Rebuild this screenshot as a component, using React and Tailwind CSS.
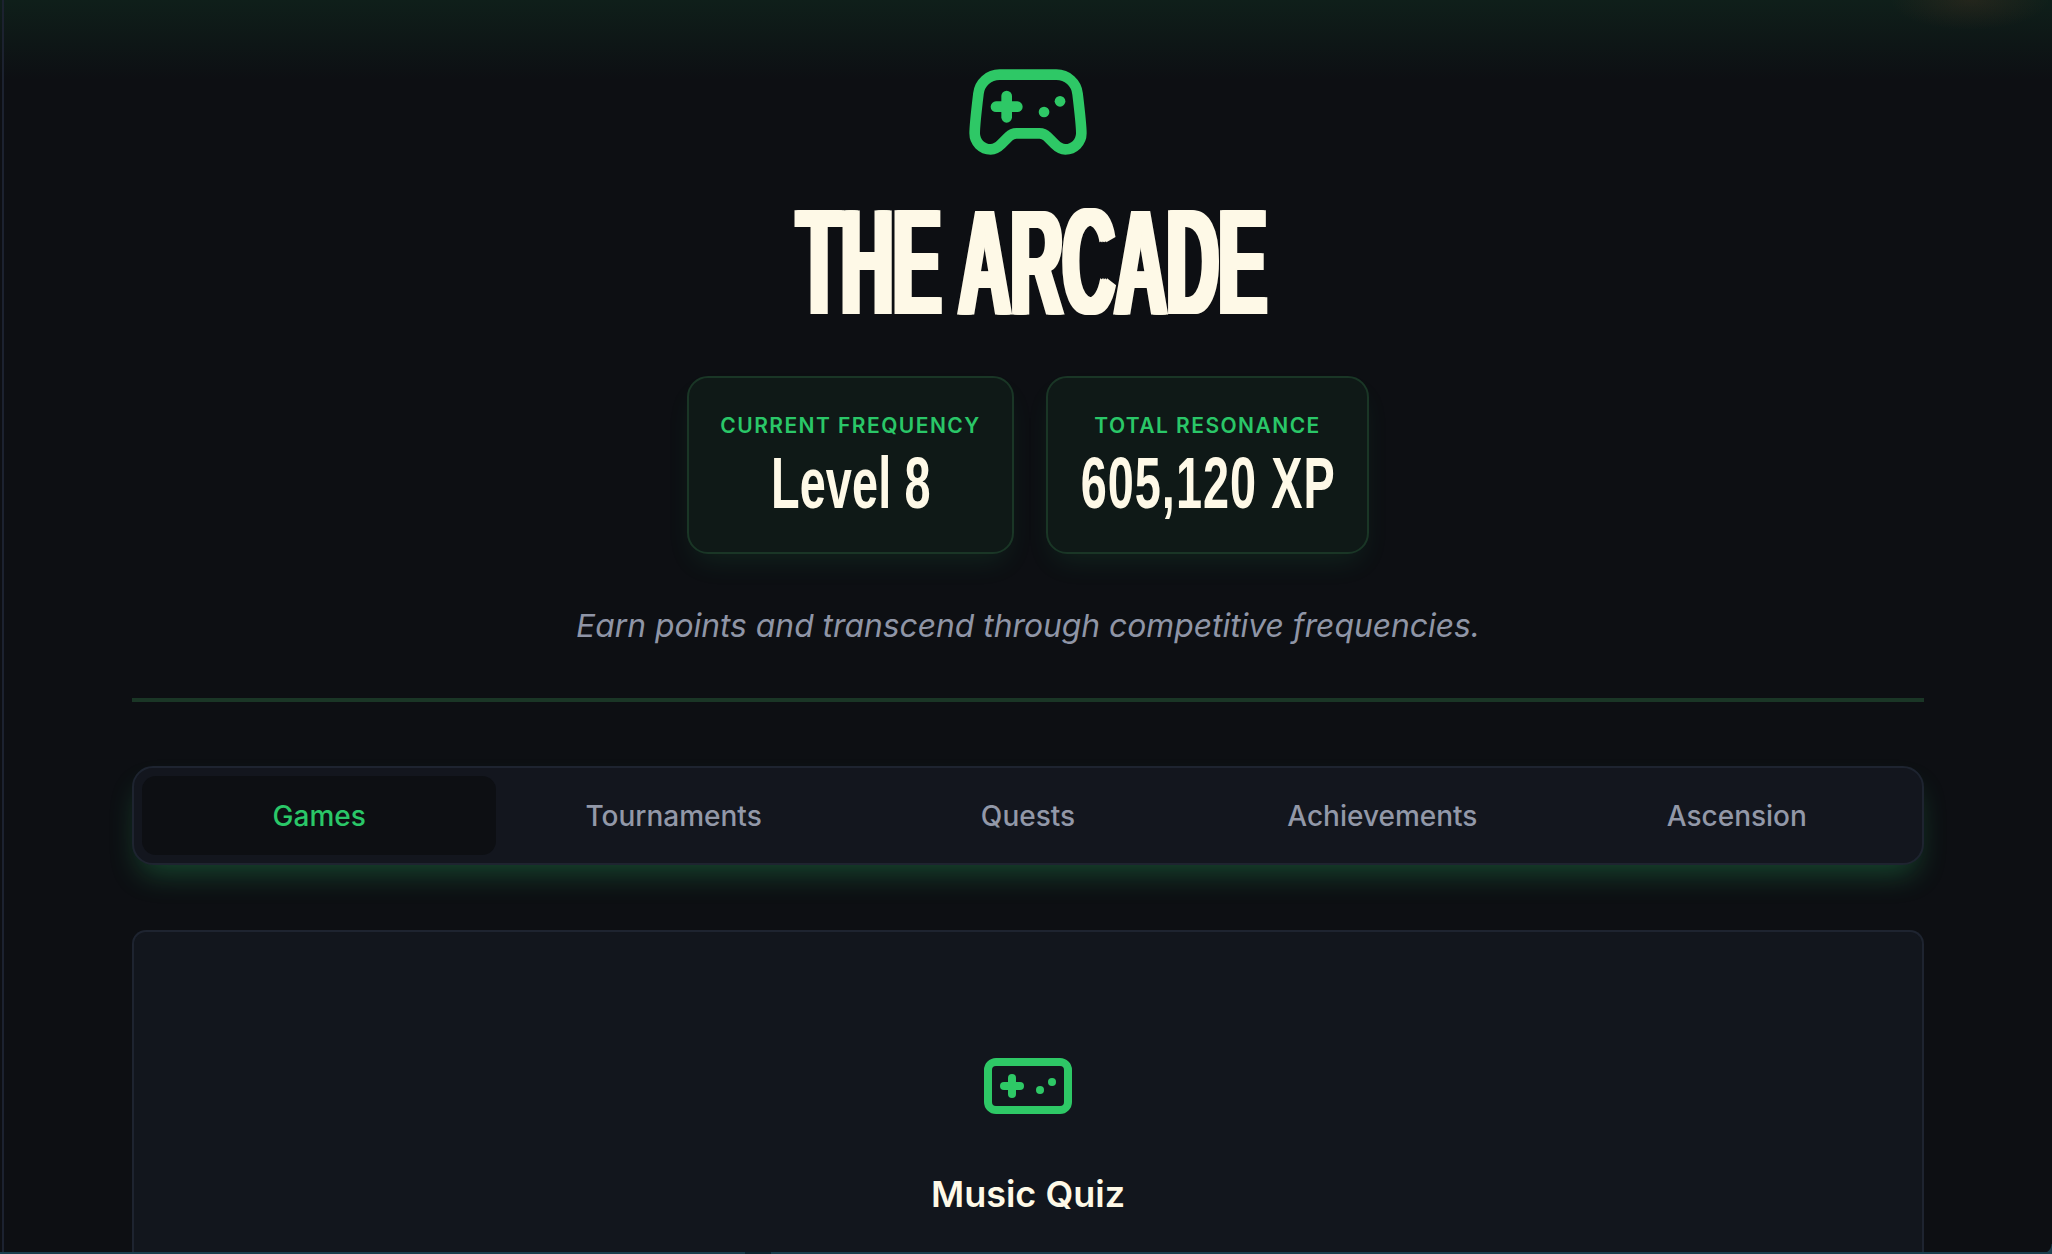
import { Gamepad, Gamepad2 } from 'lucide-react';

const TABS = ['Games', 'Tournaments', 'Quests', 'Achievements', 'Ascension'];

function StatCard({ label, value, width, valueClass }) {
  return (
    <div className={`${width} h-[178px] rounded-[21px] border-2 border-[#1a3626] bg-[#0f1917] pt-[34px] flex flex-col items-center shadow-[0_14px_28px_-7px_rgba(46,204,113,0.1)]`}>
      <div className="text-[21px] leading-[28px] font-semibold tracking-[1.45px] text-[#2ac768] whitespace-nowrap">{label}</div>
      <div className="mt-[6px] h-[74px] w-full flex justify-center">
        <span className={`font-['Liberation_Sans'] font-bold text-[72px] leading-[74px] text-[#fef9e7] whitespace-nowrap scale-x-[0.65] inline-block ${valueClass}`}>{value}</span>
      </div>
    </div>
  );
}

export default function App() {
  return (
    <div className="relative h-[1254px] overflow-hidden bg-[#0d0f13] font-['Inter',sans-serif]">
      {/* Top glows */}
      <div className="absolute inset-x-0 top-0 h-[80px] bg-linear-to-b from-[#0f1f1a] to-transparent" />
      <div className="absolute right-0 top-0 h-[70px] w-[300px] bg-[radial-gradient(ellipse_80px_30px_at_218px_0px,rgba(160,80,40,0.14),transparent)]" />

      <div className="relative ml-[2px] h-full border-l-2 border-[#1c2230] flex flex-col items-center pt-[48px]">
        <Gamepad2 size={128} strokeWidth={2} className="text-[#2ec866]" />

        <h1 className="h-[170px] flex justify-center w-full pl-[8px]">
          <span className="inline-block font-['Liberation_Sans'] font-bold text-[150px] leading-[172px] text-[#fef9e7] whitespace-nowrap scale-x-[0.48] [text-shadow:-7px_0_#fef9e7,-3px_0_#fef9e7,3px_0_#fef9e7,7px_0_#fef9e7]">THE ARCADE</span>
        </h1>

        <div className="mt-[30px] flex gap-[32px]">
          <StatCard label="CURRENT FREQUENCY" value="Level 8" width="w-[327px]" valueClass="tracking-[0.2px]" />
          <StatCard label="TOTAL RESONANCE" value="605,120 XP" width="w-[323px]" valueClass="tracking-[1.6px] translate-x-[1px]" />
        </div>

        <p className="mt-[50px] text-[31.8px] leading-[44px] italic text-[#8f95a6]">Earn points and transcend through competitive frequencies.</p>

        <div className="mt-[50px] h-[4px] w-[1792px] bg-[#1a3626]" />

        {/* Tabs */}
        <div className="mt-[64px] w-[1792px] h-[99px] rounded-[21px] border-2 border-[#1e2430] bg-[#13161e] p-[8px] grid grid-cols-5 shadow-[0_16px_30px_-8px_rgba(46,204,113,0.3)]">
          {TABS.map((t, i) => (
            <div
              key={t}
              className={`flex items-center justify-center rounded-[14px] text-[28px] font-medium ${i === 0 ? 'bg-[#0d0f13] text-[#2ac768]' : 'text-[#9298a8]'}`}
            >
              {t}
            </div>
          ))}
        </div>

        {/* Game panel */}
        <div className="mt-[65px] w-[1792px] flex-1 rounded-t-[14px] border-2 border-b-0 border-[#1e2430] bg-[#12161d] pt-[106px] flex flex-col items-center">
          <Gamepad size={96} strokeWidth={2} className="text-[#2ec866]" />
          <h2 className="mt-[36px] text-[36px] leading-[48px] font-semibold text-[#fef9e7]">Music Quiz</h2>
        </div>
      </div>

      {/* Bottom edge line */}
      <div className="absolute inset-x-0 bottom-0 h-[2px] bg-[#1a3f4e]" />
      <div className="absolute left-[745px] bottom-0 h-[2px] w-[26px] bg-[#0e2630]" />
      <div className="absolute right-0 bottom-0 h-[10px] w-[10px] bg-[radial-gradient(circle_at_0_0,transparent_9px,#1a3f4e_10px)]" />
    </div>
  );
}
